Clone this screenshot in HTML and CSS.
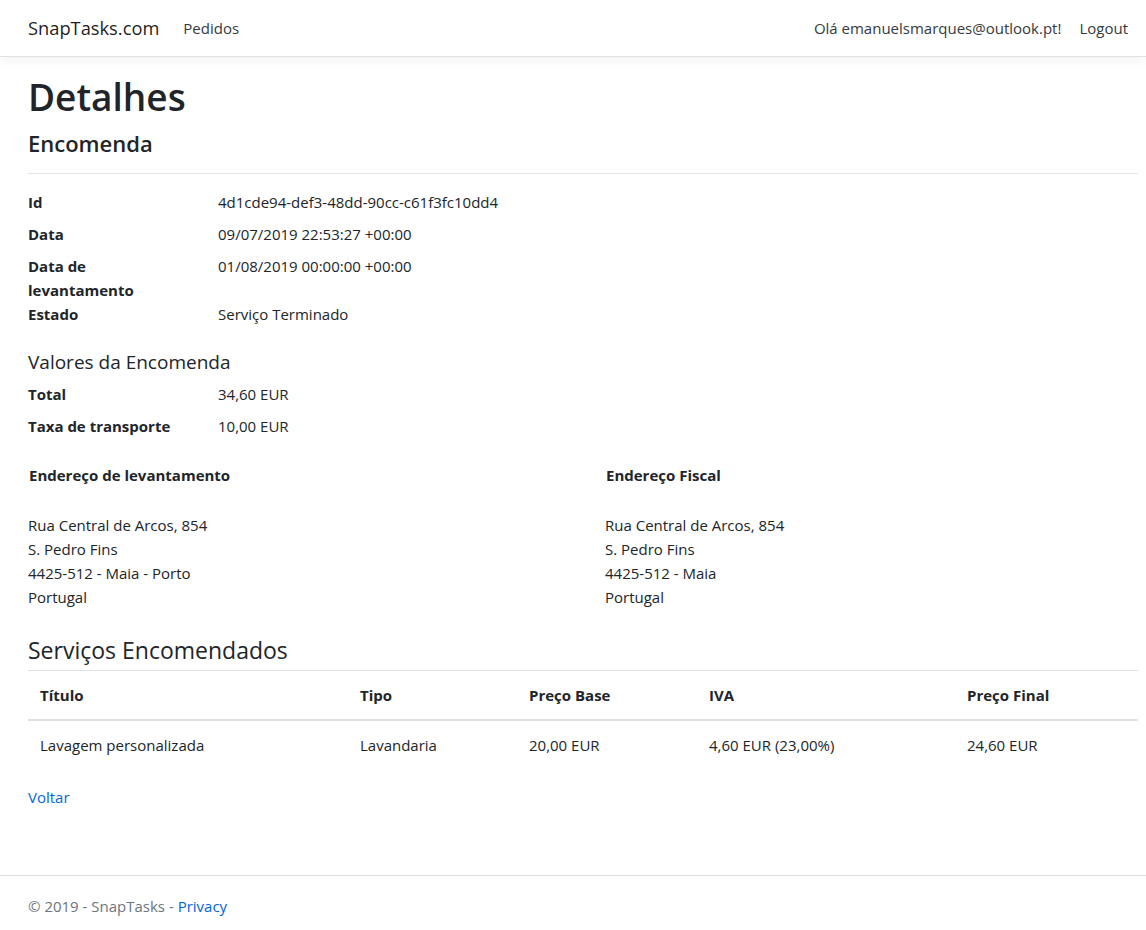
FILE: index.html
```html
<!DOCTYPE html>
<html lang="pt">
<head>
<meta charset="utf-8">
<title>Detalhes - SnapTasks</title>
<link rel="stylesheet" href="styles.css">
</head>
<body>
<header class="topbar">
  <nav class="nav">
    <div class="nav-left">
      <a class="brand" href="#">SnapTasks.com</a>
      <a class="nav-link" href="#">Pedidos</a>
    </div>
    <div class="nav-right">
      <span class="nav-link">Olá emanuelsmarques@outlook.pt!</span>
      <a class="nav-link" href="#">Logout</a>
    </div>
  </nav>
</header>

<main class="container">
  <h1 class="page-title">Detalhes</h1>
  <h4 class="section-title">Encomenda</h4>
  <hr class="rule">

  <dl class="details">
    <dt>Id</dt><dd>4d1cde94-def3-48dd-90cc-c61f3fc10dd4</dd>
    <dt>Data</dt><dd>09/07/2019 22:53:27 +00:00</dd>
    <dt>Data de levantamento</dt><dd>01/08/2019 00:00:00 +00:00</dd>
    <dt>Estado</dt><dd>Serviço Terminado</dd>
  </dl>

  <h5 class="sub-title">Valores da Encomenda</h5>
  <dl class="details">
    <dt>Total</dt><dd>34,60 EUR</dd>
    <dt>Taxa de transporte</dt><dd>10,00 EUR</dd>
  </dl>

  <div class="addresses">
    <div class="address">
      <p class="addr-title">Endereço de levantamento</p>
      <p class="addr-lines">Rua Central de Arcos, 854<br>S. Pedro Fins<br>4425-512 - Maia - Porto<br>Portugal</p>
    </div>
    <div class="address">
      <p class="addr-title">Endereço Fiscal</p>
      <p class="addr-lines">Rua Central de Arcos, 854<br>S. Pedro Fins<br>4425-512 - Maia<br>Portugal</p>
    </div>
  </div>

  <h4 class="table-title">Serviços Encomendados</h4>
  <table class="table">
    <thead>
      <tr>
        <th class="c-title">Título</th>
        <th class="c-type">Tipo</th>
        <th class="c-base">Preço Base</th>
        <th class="c-iva">IVA</th>
        <th class="c-final">Preço Final</th>
      </tr>
    </thead>
    <tbody>
      <tr>
        <td>Lavagem personalizada</td>
        <td>Lavandaria</td>
        <td>20,00 EUR</td>
        <td>4,60 EUR (23,00%)</td>
        <td>24,60 EUR</td>
      </tr>
    </tbody>
  </table>

  <div class="back"><a href="#">Voltar</a></div>
</main>

<footer class="footer">
  <div class="footer-inner">© 2019 - SnapTasks - <a href="#">Privacy</a></div>
</footer>
</body>
</html>
```

FILE: styles.css
```css
* { box-sizing: border-box; }

html, body {
  margin: 0;
  padding: 0;
}

body {
  font-family: "Open Sans", "Noto Sans", "DejaVu Sans", sans-serif;
  font-size: 15px;
  line-height: 24px;
  color: #212529;
  background: #fff;
}

a { color: #0366d6; text-decoration: none; }

/* Navbar */
.topbar {
  border-bottom: 1px solid #dee2e6;
  box-shadow: 0 4px 12px rgba(0, 0, 0, 0.05);
  height: 57px;
}

.nav {
  height: 55px;
  display: flex;
  align-items: center;
  justify-content: space-between;
  padding: 0 10px 0 28px;
}

.nav-left, .nav-right {
  display: flex;
  align-items: center;
}

.brand {
  font-size: 18.3px;
  line-height: 30px;
  color: rgba(0, 0, 0, 0.9);
  margin-right: 16px;
}

.nav-link {
  color: #343a40;
  padding: 8px 8px;
}

.nav-right .nav-link + .nav-link {
  margin-left: 2px;
}

/* Main */
.container {
  padding: 16px 8px 0 28px;
}

.page-title {
  font-size: 37px;
  line-height: 48px;
  font-weight: 600;
  margin: 0 0 8px;
}

.section-title {
  font-size: 22px;
  line-height: 29px;
  font-weight: 600;
  margin: 0;
}

.rule {
  border: 0;
  border-top: 1px solid #e5e5e5;
  margin: 15px 0 16px;
}

.details {
  display: grid;
  grid-template-columns: 190px 1fr;
  margin: 0 0 16px;
}

.details dt {
  font-weight: 700;
  padding-right: 30px;
}

.details dd {
  margin: 0 0 8px;
}

.sub-title {
  font-size: 19px;
  line-height: 24px;
  font-weight: 500;
  margin: 0 0 8px;
}

.addresses {
  display: grid;
  grid-template-columns: 577px 1fr;
  padding-top: 1px;
  margin-bottom: 27px;
}

.addr-title {
  font-weight: 700;
  margin: 0 0 26px 1px;
}

.addr-lines {
  margin: 0;
}

.table-title {
  font-size: 23px;
  line-height: 29px;
  font-weight: 500;
  margin: 0 0 5px;
}

.table {
  width: 100%;
  border-collapse: collapse;
  margin-bottom: 16px;
}

.table th,
.table td {
  text-align: left;
  padding: 12px;
  vertical-align: top;
  border-top: 1px solid #dee2e6;
}

.table thead th {
  font-weight: 700;
  border-bottom: 2px solid #dee2e6;
}

.c-title { width: 320px; }
.c-type { width: 169px; }
.c-base { width: 180px; }
.c-iva { width: 258px; }
.c-final { width: auto; }

.back {
  margin-bottom: 66px;
}

/* Footer */
.footer {
  border-top: 1px solid #dee2e6;
  color: #6c757d;
  line-height: 60px;
  white-space: nowrap;
}

.footer-inner {
  padding-left: 28px;
}
```
